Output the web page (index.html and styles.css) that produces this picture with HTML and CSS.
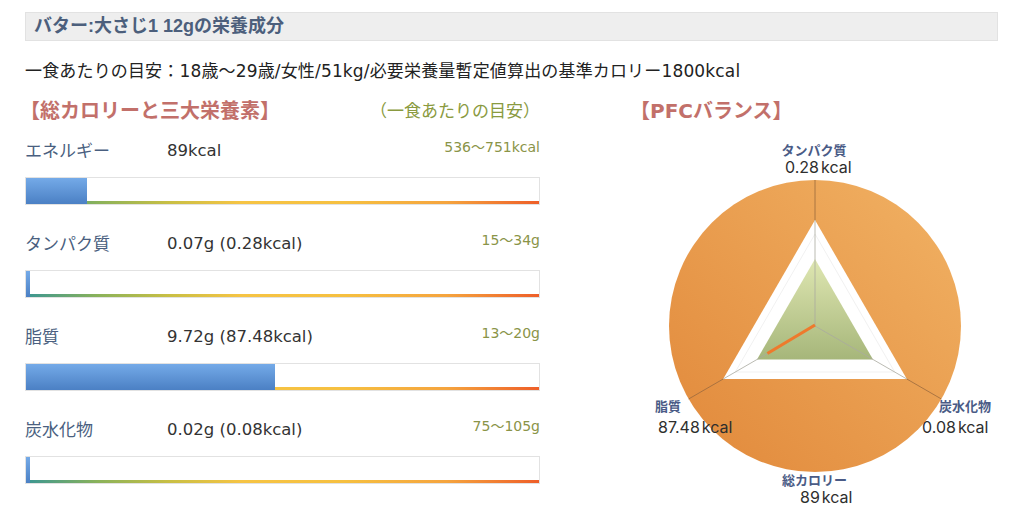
FILE: index.html
```html
<!DOCTYPE html>
<html lang="ja">
<head>
<meta charset="utf-8">
<title>バターの栄養成分</title>
<link rel="stylesheet" href="styles.css">
</head>
<body>
<div class="page">
  <h1 class="title">バター:大さじ1 12gの栄養成分</h1>
  <p class="intro">一食あたりの目安：18歳〜29歳/女性/51kg/必要栄養量暫定値算出の基準カロリー1800kcal</p>
  <div class="main">
    <section class="nutrients">
      <div class="sec-head">
        <h2 class="sec-title">【総カロリーと三大栄養素】</h2>
        <span class="sec-note">（一食あたりの目安）</span>
      </div>
      <div class="row">
        <div class="row-head"><span class="label">エネルギー</span><span class="value">89kcal</span><span class="range">536〜751kcal</span></div>
        <div class="bar"><div class="fill" style="width:11.85%"></div></div>
      </div>
      <div class="row">
        <div class="row-head"><span class="label">タンパク質</span><span class="value">0.07g (0.28kcal)</span><span class="range">15〜34g</span></div>
        <div class="bar"><div class="fill" style="width:0.2%"></div></div>
      </div>
      <div class="row">
        <div class="row-head"><span class="label">脂質</span><span class="value">9.72g (87.48kcal)</span><span class="range">13〜20g</span></div>
        <div class="bar"><div class="fill" style="width:48.6%"></div></div>
      </div>
      <div class="row">
        <div class="row-head"><span class="label">炭水化物</span><span class="value">0.02g (0.08kcal)</span><span class="range">75〜105g</span></div>
        <div class="bar"><div class="fill" style="width:0.02%"></div></div>
      </div>
    </section>
    <section class="pfc">
      <h2 class="sec-title pfc-title">【PFCバランス】</h2>
      <svg class="radar" viewBox="0 0 378 380" width="378" height="380" xmlns="http://www.w3.org/2000/svg">
        <defs>
          <linearGradient id="disc" x1="1" y1="0" x2="0" y2="1">
            <stop offset="0" stop-color="#f1b264"/>
            <stop offset="1" stop-color="#e1883a"/>
          </linearGradient>
          <linearGradient id="green" x1="0" y1="0" x2="0" y2="1">
            <stop offset="0" stop-color="#dfe7b2"/>
            <stop offset="1" stop-color="#a6b67a"/>
          </linearGradient>
        </defs>
        <circle cx="195" cy="196" r="146" fill="url(#disc)"/>
        <polygon points="195,90 103.2,249 286.8,249" fill="#ffffff"/>
        <polygon points="195,104 115.3,242 274.7,242" fill="none" stroke="#f1f1f1" stroke-width="1"/>
        <polygon points="195,129 137,229.5 253,229.5" fill="url(#green)"/>
        <g stroke-width="0.8">
          <line x1="195" y1="196" x2="195" y2="90" stroke="#a9a9a0"/>
          <line x1="195" y1="196" x2="103.2" y2="249" stroke="#a9a9a0"/>
          <line x1="195" y1="196" x2="286.8" y2="249" stroke="#a9a9a0"/>
          <line x1="195" y1="90" x2="195" y2="50" stroke="#9a6a3e"/>
          <line x1="103.2" y1="249" x2="68.6" y2="269" stroke="#9a6a3e"/>
          <line x1="286.8" y1="249" x2="321.4" y2="269" stroke="#9a6a3e"/>
        </g>
        <polyline points="195,195 147.4,223.5" fill="none" stroke="#ee7a2c" stroke-width="3.2" stroke-linecap="butt"/>
        <g class="chart-label">
          <text x="194" y="25" text-anchor="middle">タンパク質</text>
          <text x="35" y="281">脂質</text>
          <text x="319" y="281">炭水化物</text>
          <text x="162" y="355">総カロリー</text>
        </g>
        <g class="chart-value">
          <text x="165" y="43">0.28<tspan dx="2">kcal</tspan></text>
          <text x="38" y="303">87.48<tspan dx="2">kcal</tspan></text>
          <text x="302" y="303">0.08<tspan dx="2">kcal</tspan></text>
          <text x="180" y="373">89<tspan dx="2">kcal</tspan></text>
        </g>
      </svg>
    </section>
  </div>
</div>
</body>
</html>
```
FILE: styles.css
```css
* { box-sizing: border-box; }

body {
  margin: 0;
  background: #ffffff;
  font-family: "DejaVu Sans", "Noto Sans CJK JP", sans-serif;
  color: #222;
}

.page {
  padding: 12px 26px 0 25px;
}

.title {
  margin: 0;
  height: 29px;
  padding-left: 8px;
  background: #eeeeee;
  border: 1px solid #e2e2e2;
  color: #4c5f7c;
  font-family: "Liberation Sans", "Noto Sans CJK JP", sans-serif;
  font-size: 18px;
  font-weight: bold;
  line-height: 27px;
}

.intro {
  margin: 19px 0 0;
  font-size: 17px;
  line-height: 22px;
  letter-spacing: 0.16px;
  color: #222;
}

.main {
  display: flex;
  margin-top: 17px;
}

.nutrients {
  flex: none;
  width: 515px;
}

.sec-head {
  display: flex;
  justify-content: space-between;
  align-items: center;
}

.sec-title {
  margin: 0 0 0 -5px;
  font-size: 20px;
  line-height: 24px;
  font-weight: bold;
  color: #c2706a;
}

.sec-note {
  font-size: 17px;
  line-height: 24px;
  color: #8a9a40;
}

.row {
  margin-top: 16px;
}

.row + .row {
  margin-top: 27px;
}

.row-head {
  display: flex;
  align-items: flex-start;
  height: 24px;
}

.label {
  width: 142px;
  font-size: 17px;
  line-height: 24px;
  color: #4a5f80;
}

.value {
  flex: 1;
  font-size: 16.5px;
  line-height: 24px;
  color: #333;
}

.range {
  font-size: 14px;
  line-height: 18px;
  margin-top: -1px;
  color: #8a9448;
}

.bar {
  margin-top: 14px;
  height: 28px;
  border: 1px solid #e2e2e2;
  background:
    linear-gradient(90deg, #3a9692 0%, #8ab25a 14%, #c9bf44 28%, #f6c444 42%, #f6c040 62%, #f5a43e 82%, #ee5e28 100%) left bottom / 100% 3px no-repeat,
    #ffffff;
}

.fill {
  height: 100%;
  min-width: 4px;
  background: linear-gradient(180deg, #74aae8 0%, #4b80c4 100%);
}

.pfc {
  flex: none;
  margin-left: 80px;
  width: 378px;
}

.pfc-title {
  margin-left: 10px;
}

.radar {
  display: block;
  margin-top: 7px;
}

.chart-label text {
  font-family: "Noto Sans CJK JP", sans-serif;
  font-size: 13px;
  font-weight: 700;
  fill: #4a5b86;
}

.chart-value text {
  font-family: "Inter", "Noto Sans CJK JP", sans-serif;
  font-size: 16px;
  fill: #2e2e2e;
}
```
